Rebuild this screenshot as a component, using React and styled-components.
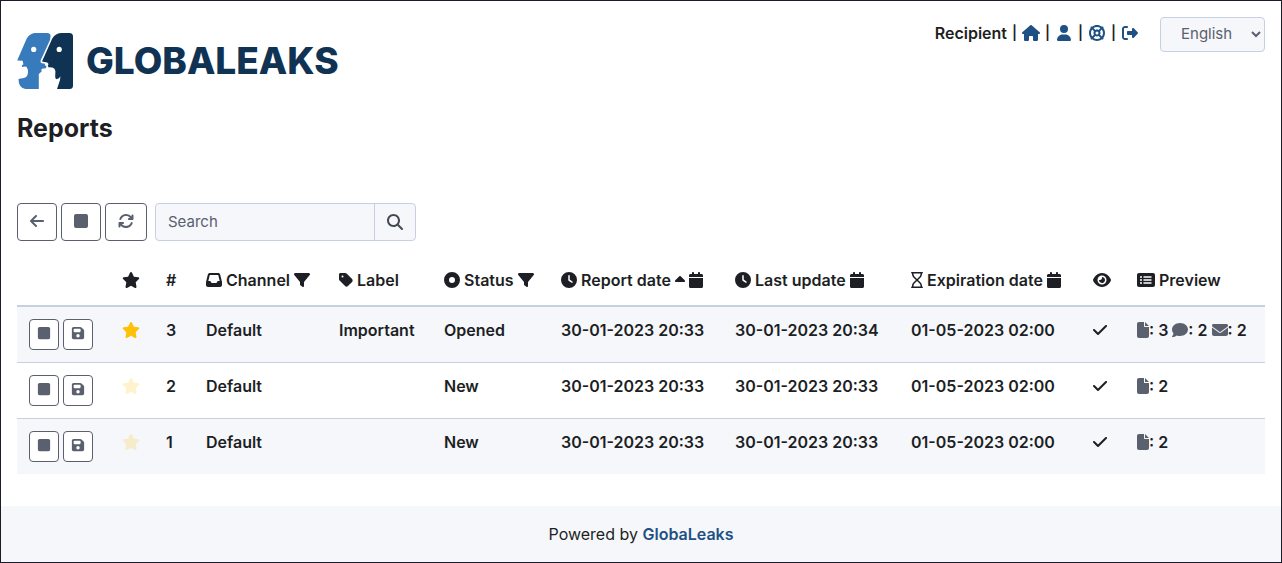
import React from "react";
import styled, { createGlobalStyle, css } from "styled-components";
import {
  FaHouse,
  FaUser,
  FaLifeRing,
  FaRightFromBracket,
  FaArrowLeft,
  FaSquare,
  FaArrowsRotate,
  FaMagnifyingGlass,
  FaStar,
  FaInbox,
  FaFilter,
  FaTag,
  FaCircleDot,
  FaClock,
  FaCaretUp,
  FaCalendar,
  FaRegHourglass,
  FaEye,
  FaRectangleList,
  FaFloppyDisk,
  FaCheck,
  FaFile,
  FaComment,
  FaEnvelope,
} from "react-icons/fa6";

const color = {
  ink: "#1d1f24",
  frame: "#1c1b29",
  link: "#1f5083",
  muted: "#5a606e",
  line: "#c6d0e1",
  panel: "#f5f7fb",
  navy: "#103253",
  blue: "#377bbc",
  star: "#ffc107",
};

const GlobalStyle = createGlobalStyle`
  *, *::before, *::after { box-sizing: border-box; }
  body {
    margin: 0;
    background: #fff;
    color: ${color.ink};
    font: 16px/24px Inter, "Liberation Sans", sans-serif;
  }
  button, input, select { font: inherit; color: inherit; }
`;

const Page = styled.div`
  display: flex;
  flex-direction: column;
  min-height: 100vh;
  border: 1px solid ${color.frame};
`;

const Header = styled.header`
  display: flex;
  justify-content: space-between;
  align-items: flex-start;
  padding: 16px 16px 0;
`;

const Brand = styled.a`
  display: flex;
  align-items: center;
  gap: 12px;
  margin-top: 16px;
  color: ${color.navy};
  font-size: 37px;
  line-height: 56px;
  font-weight: 800;
  text-decoration: none;
`;

const UserBar = styled.div`
  display: flex;
  align-items: flex-start;
  gap: 21px;
`;

const UserNav = styled.nav`
  display: flex;
  gap: 5px;
  padding-top: 4px;
  font-weight: 600;
`;

const Divider = styled.span`
  display: flex;
  justify-content: center;
  width: 5px;
  font-size: 14px;
`;

/* Icons share one height; each takes the width its glyph's grid asks for. */
const iconBox = css`
  svg {
    width: 16px;
    height: 16px;
    vertical-align: -2px;
  }
  svg[viewBox="0 0 576 512"] { width: 18px; }
  svg[viewBox="0 0 448 512"] { width: 14px; }
  svg[viewBox="0 0 384 512"] { width: 12px; }
  svg[viewBox="0 0 320 512"] { width: 10px; }
`;

const NavLink = styled.a`
  display: flex;
  align-items: center;
  justify-content: center;
  width: 18px;
  color: ${color.link};
  ${iconBox}
`;

const LanguageSelect = styled.select`
  width: 105px;
  height: 35px;
  padding: 0 0 2px 16px;
  border: 1px solid ${color.line};
  border-radius: 4px;
  background: ${color.panel};
  color: ${color.muted};
  font-size: 15px;
`;

const Main = styled.main`
  flex: 1;
  padding: 22px 16px 32px;
`;

const Title = styled.h1`
  margin: 0 0 58px;
  font-size: 25px;
  line-height: 34px;
  font-weight: 700;
`;

const Toolbar = styled.div`
  display: flex;
  gap: 4px;
  margin-bottom: 16px;
`;

const ToolButton = styled.button`
  height: 38px;
  padding: 0 12px 2px;
  border: 1px solid ${color.muted};
  border-radius: 4px;
  background: #fff;
  color: ${color.muted};
  ${iconBox}
`;

const SearchGroup = styled.form`
  display: flex;
  width: 261px;
  height: 38px;
  margin-left: 4px;
  border: 1px solid ${color.line};
  border-radius: 4px;
  background: ${color.panel};
  overflow: hidden;
`;

const SearchInput = styled.input`
  flex: 1;
  min-width: 0;
  padding: 0 12px;
  border: 0;
  background: transparent;
  font-size: 15px;
  &::placeholder { color: ${color.muted}; opacity: 1; }
`;

const SearchButton = styled.button`
  width: 41px;
  padding: 0;
  border: 0;
  border-left: 1px solid ${color.line};
  background: transparent;
  color: #434a54;
  ${iconBox}
`;

const Table = styled.table`
  width: 100%;
  table-layout: fixed;
  border-collapse: separate;
  border-spacing: 0;
  font-weight: 600;
`;

const Col = styled.col`
  width: ${(p) => p.$w}px;
`;

const HeadCell = styled.th`
  padding: 11px 12px 13px;
  border-bottom: 2px solid ${color.line};
  text-align: left;
  font-weight: 600;
  white-space: nowrap;
  ${iconBox}
`;

const Row = styled.tr`
  &:nth-child(odd) { background: ${color.panel}; }
  &:not(:last-child) td { border-bottom: 1px solid ${color.line}; }
`;

const Cell = styled.td`
  padding: 11px 12px 12px;
  vertical-align: top;
  white-space: nowrap;
  ${iconBox}
`;

const RowActions = styled.div`
  display: flex;
  gap: 4px;
  padding-top: 1px;
`;

const RowButton = styled.button`
  display: flex;
  align-items: center;
  justify-content: center;
  width: 30px;
  height: 31px;
  padding: 0 0 3px;
  border: 1px solid ${color.muted};
  border-radius: 4px;
  background: #fff;
  color: ${color.muted};
  && svg { height: 14px; }
`;

const StarButton = styled.button`
  padding: 0;
  border: 0;
  background: none;
  color: ${color.star};
  opacity: ${(p) => (p.$on ? 1 : 0.2)};
`;

const Count = styled.span`
  svg { color: ${color.muted}; }
`;

const Footer = styled.footer`
  padding: 16px;
  background: ${color.panel};
  text-align: center;
`;

const FooterLink = styled.a`
  color: ${color.link};
  font-weight: 600;
  text-decoration: none;
`;

const LogoMark = () => (
  <svg width="57" height="56" viewBox="0 0 57 56" aria-hidden="true">
    <path
      fill={color.blue}
      d="M17.5 0H30Q33.5 0 33.6 3.2L33 7L23.6 27.6Q23 30 25 30.3L28 30.8V32.5L29.6 33L28.8 35.2L25 35.8Q24 36 24.6 38.4L21.8 41V56H8.5Q1.5 55 1.5 46L3.8 45.4Q10.8 45.5 11 39.5Q11 35 9 33.6L5 33.9L4.8 32.6L6.4 31.2L5.6 27.8L.2 27.4L9.5 6Q12 1 17.5 0Z"
    />
    <path
      fill={color.navy}
      d="M44 0H52.5Q56 0 56 3.5V52.5Q56 56 52.5 56H40L43 47L43.4 43.6L41.6 45.4L39 46.2L38.2 44.2L38.4 38Q38 35.4 35.5 34.5L31.5 34.2L30.8 32.6L31.6 31L30.2 29.4L25 28.6L35 6Q38 .6 44 0Z"
    />
    <circle cx="16.7" cy="16.4" r="2.6" fill="#fff" />
    <circle cx="42.2" cy="16.4" r="2.6" fill="#fff" />
  </svg>
);

const columnWidths = [93, 44, 40, 133, 105, 117, 174, 176, 182, 44, 140];

const reports = [
  {
    id: 3, starred: true, label: "Important", status: "Opened",
    updated: "30-01-2023 20:34", files: 3, comments: 2, messages: 2,
  },
  { id: 2, status: "New", updated: "30-01-2023 20:33", files: 2 },
  { id: 1, status: "New", updated: "30-01-2023 20:33", files: 2 },
];

const navItems = [
  ["Home", FaHouse],
  ["Preferences", FaUser],
  ["Support", FaLifeRing],
  ["Log out", FaRightFromBracket],
];

export default function App() {
  return (
    <>
      <GlobalStyle />
      <Page>
        <Header>
          <Brand href="#">
            <LogoMark />
            <span>GLOBALEAKS</span>
          </Brand>
          <UserBar>
            <UserNav>
              <span>Recipient</span>
              {navItems.map(([name, Icon]) => (
                <React.Fragment key={name}>
                  <Divider>|</Divider>
                  <NavLink href="#" aria-label={name}><Icon /></NavLink>
                </React.Fragment>
              ))}
            </UserNav>
            <LanguageSelect aria-label="Language" defaultValue="en">
              <option value="en">English</option>
            </LanguageSelect>
          </UserBar>
        </Header>

        <Main>
          <Title>Reports</Title>
          <Toolbar>
            <ToolButton aria-label="Back"><FaArrowLeft /></ToolButton>
            <ToolButton aria-label="Select all"><FaSquare /></ToolButton>
            <ToolButton aria-label="Refresh"><FaArrowsRotate /></ToolButton>
            <SearchGroup role="search" onSubmit={(e) => e.preventDefault()}>
              <SearchInput type="text" placeholder="Search" aria-label="Search" />
              <SearchButton aria-label="Submit search"><FaMagnifyingGlass /></SearchButton>
            </SearchGroup>
          </Toolbar>

          <Table>
            <colgroup>
              {columnWidths.map((w, i) => <Col key={i} $w={w} />)}
            </colgroup>
            <thead>
              <tr>
                <HeadCell aria-label="Actions" />
                <HeadCell aria-label="Starred"><FaStar /></HeadCell>
                <HeadCell>#</HeadCell>
                <HeadCell><FaInbox /> Channel <FaFilter /></HeadCell>
                <HeadCell><FaTag /> Label</HeadCell>
                <HeadCell><FaCircleDot /> Status <FaFilter /></HeadCell>
                <HeadCell><FaClock /> Report date <FaCaretUp /> <FaCalendar /></HeadCell>
                <HeadCell><FaClock /> Last update <FaCalendar /></HeadCell>
                <HeadCell><FaRegHourglass /> Expiration date <FaCalendar /></HeadCell>
                <HeadCell aria-label="Read"><FaEye /></HeadCell>
                <HeadCell><FaRectangleList /> Preview</HeadCell>
              </tr>
            </thead>
            <tbody>
              {reports.map((r) => (
                <Row key={r.id}>
                  <Cell>
                    <RowActions>
                      <RowButton aria-label={`Select report ${r.id}`}><FaSquare /></RowButton>
                      <RowButton aria-label={`Export report ${r.id}`}><FaFloppyDisk /></RowButton>
                    </RowActions>
                  </Cell>
                  <Cell>
                    <StarButton $on={r.starred} aria-label={`Star report ${r.id}`}><FaStar /></StarButton>
                  </Cell>
                  <Cell>{r.id}</Cell>
                  <Cell>Default</Cell>
                  <Cell>{r.label}</Cell>
                  <Cell>{r.status}</Cell>
                  <Cell>30-01-2023 20:33</Cell>
                  <Cell>{r.updated}</Cell>
                  <Cell>01-05-2023 02:00</Cell>
                  <Cell><FaCheck /></Cell>
                  <Cell>
                    <Count><FaFile />: {r.files}</Count>
                    {r.comments && <> <Count><FaComment />: {r.comments}</Count></>}
                    {r.messages && <> <Count><FaEnvelope />: {r.messages}</Count></>}
                  </Cell>
                </Row>
              ))}
            </tbody>
          </Table>
        </Main>

        <Footer>
          Powered by <FooterLink href="#">GlobaLeaks</FooterLink>
        </Footer>
      </Page>
    </>
  );
}
